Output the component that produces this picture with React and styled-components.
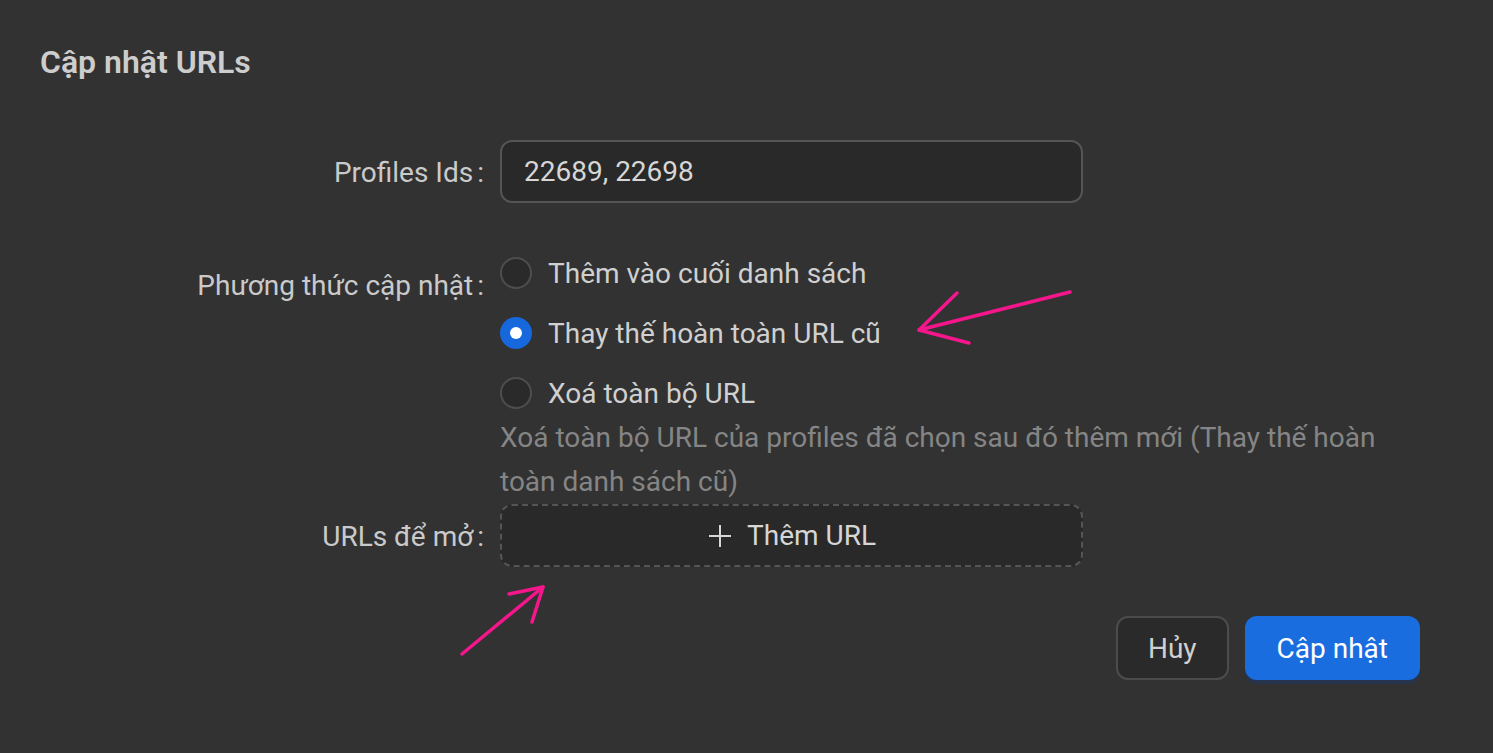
import React from 'react';
import styled, { createGlobalStyle } from 'styled-components';

const GlobalStyle = createGlobalStyle`
    html, body {
        margin: 0;
        padding: 0;
        background: #323232;
    }
    body {
        font-family: Roboto, "Noto Sans", sans-serif;
        color: #d4d4d4;
    }
`;

const Page = styled.main`
    position: relative;
    width: 1493px;
    height: 753px;
    box-sizing: border-box;
    padding: 40px 40px 0 40px;
    background: #323232;
    overflow: hidden;
`;

const Title = styled.h1`
    margin: 0;
    font-size: 32px;
    font-weight: 600;
    line-height: 44px;
    color: #cdcdcd;
`;

const Form = styled.form`
    display: grid;
    grid-template-columns: 444px 900px;
    column-gap: 16px;
    margin-top: 56px;
`;

const Label = styled.label`
    display: flex;
    justify-content: flex-end;
    align-items: center;
    align-self: ${props => props.$top ? 'start' : 'auto'};
    margin-top: ${props => props.$top ? 2 : 0}px;
    height: 64px;
    font-size: 28px;
    color: #cacaca;
    white-space: nowrap;

    &::after {
        content: ':';
        margin-left: 4px;
    }
`;

const Field = styled.div`
    display: flex;
    flex-direction: column;
    margin-bottom: ${props => props.$gap || 0}px;
`;

const TextInput = styled.div`
    box-sizing: border-box;
    width: 583px;
    height: 63px;
    display: flex;
    align-items: center;
    padding: 0 22px;
    background: #292929;
    border: 2px solid #555;
    border-radius: 12px;
    font-size: 28px;
    color: #d6d6d6;
`;

const RadioList = styled.div`
    display: flex;
    flex-direction: column;
    gap: 16px;
`;

const RadioRow = styled.label`
    display: flex;
    align-items: center;
    height: 44px;
    gap: 16px;
    font-size: 28px;
    color: #d0d0d0;
`;

const RadioDot = styled.span`
    box-sizing: border-box;
    width: 32px;
    height: 32px;
    border-radius: 50%;
    flex-shrink: 0;
    background: ${props => props.$checked ? '#1668dc' : '#2a2a2a'};
    border: 2px solid ${props => props.$checked ? '#1668dc' : '#4e4e4e'};
    display: flex;
    align-items: center;
    justify-content: center;

    &::after {
        content: '';
        display: ${props => props.$checked ? 'block' : 'none'};
        width: 12px;
        height: 12px;
        border-radius: 50%;
        background: #fff;
    }
`;

const Hint = styled.div`
    margin-top: 1px;
    font-size: 28px;
    line-height: 44px;
    color: #858585;
    max-width: 880px;
`;

const DashedButton = styled.button`
    box-sizing: border-box;
    width: 583px;
    height: 63px;
    display: flex;
    align-items: center;
    justify-content: center;
    gap: 14px;
    padding: 0;
    background: #292929;
    border: 2px dashed #555;
    border-radius: 12px;
    font-family: inherit;
    font-size: 28px;
    color: #d6d6d6;
`;

const Footer = styled.div`
    display: flex;
    justify-content: flex-end;
    gap: 16px;
    width: 1380px;
    margin-top: 48px;
`;

const Button = styled.button`
    box-sizing: border-box;
    height: 64px;
    padding: 0 30px;
    border-radius: 12px;
    font-family: inherit;
    font-size: 28px;
    color: ${props => props.$primary ? '#fff' : '#d0d0d0'};
    background: ${props => props.$primary ? '#1a6ddf' : '#2a2a2a'};
    border: 2px solid ${props => props.$primary ? '#1a6ddf' : '#4c4c4c'};
    box-shadow: ${props => props.$primary ? '0 4px 0 rgba(5, 60, 160, 0.25)' : 'none'};
`;

const Arrows = styled.svg`
    position: absolute;
    left: 0;
    top: 0;
    pointer-events: none;
`;

const PlusIcon = () => (
    <svg width="26" height="26" viewBox="0 0 26 26" fill="none" stroke="#d6d6d6" strokeWidth="2">
        <path d="M13 2v22M2 13h22" />
    </svg>
);

const App = () => {
    return (
        <Page>
            <GlobalStyle />
            <Title>Cập nhật URLs</Title>
            <Form>
                <Label>Profiles Ids</Label>
                <Field $gap={48}>
                    <TextInput>22689, 22698</TextInput>
                </Field>

                <Label $top>Phương thức cập nhật</Label>
                <Field>
                    <RadioList>
                        <RadioRow><RadioDot />Thêm vào cuối danh sách</RadioRow>
                        <RadioRow><RadioDot $checked />Thay thế hoàn toàn URL cũ</RadioRow>
                        <RadioRow><RadioDot />Xoá toàn bộ URL</RadioRow>
                    </RadioList>
                    <Hint>Xoá toàn bộ URL của profiles đã chọn sau đó thêm mới (Thay thế hoàn toàn danh sách cũ)</Hint>
                </Field>

                <Label>URLs để mở</Label>
                <Field>
                    <DashedButton type="button"><PlusIcon />Thêm URL</DashedButton>
                </Field>
            </Form>
            <Footer>
                <Button type="button">Hủy</Button>
                <Button type="button" $primary>Cập nhật</Button>
            </Footer>
            <Arrows width="1493" height="753" fill="none" stroke="#f5168c" strokeWidth="3.5" strokeLinecap="round" strokeLinejoin="round">
                <path d="M1070 292 L919 330" />
                <path d="M957 293 L919 330 L969 343" />
                <path d="M462 654 L543 587" />
                <path d="M509 594 L543 587 L532 622" />
            </Arrows>
        </Page>
    );
};

export default App;
